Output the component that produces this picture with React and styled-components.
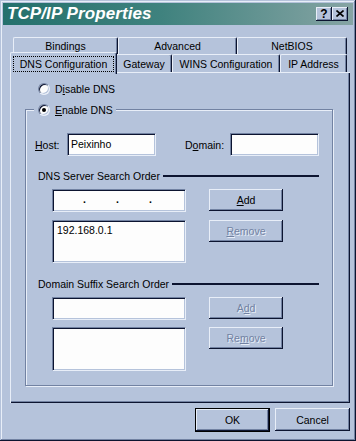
import styled, { createGlobalStyle, css } from "styled-components";

const c = {
    face: "#b5c3db",
    light: "#e8eef8",
    shadow: "#7282a2",
    dark: "#0c1430",
    field: "#fdfdfd",
};

const GlobalStyle = createGlobalStyle`
    * { box-sizing: border-box; }
    html, body {
        margin: 0;
        padding: 0;
        background: ${c.face};
    }
    body {
        font-family: "Liberation Sans", Arial, sans-serif;
        font-size: 10.5px;
        color: #000;
    }
`;

const raised = css`
    box-shadow: inset -1px -1px ${c.dark}, inset 1px 1px ${c.light},
    inset -2px -2px ${c.shadow}, inset 2px 2px ${c.face};
`;

const sunken = css`
    border: 1px solid;
    border-color: ${c.shadow} ${c.light} ${c.light} ${c.shadow};
    box-shadow: inset 1px 1px ${c.dark}, inset -1px -1px ${c.face};
`;

const Window = styled.div`
    width: 356px;
    height: 441px;
    padding: 3px;
    background: ${c.face};
    display: flex;
    flex-direction: column;
    box-shadow: inset -1px -1px ${c.dark}, inset 1px 1px ${c.face},
    inset -2px -2px ${c.shadow}, inset 2px 2px ${c.light};
`;

const TitleBar = styled.div`
    height: 22px;
    display: flex;
    align-items: center;
    justify-content: space-between;
    padding: 0 5px 0 4px;
    background: linear-gradient(90deg, #24706c 0%, #3f827e 45%, #86a4a4 100%);
`;

const TitleText = styled.span`
    color: #fff;
    font-size: 17px;
    font-weight: bold;
    font-style: italic;
    letter-spacing: 0.1px;
`;

const TitleButtons = styled.div`
    display: flex;
`;

const CaptionButton = styled.div`
    width: 16px;
    height: 14px;
    background: ${c.face};
    ${raised};
    display: flex;
    align-items: center;
    justify-content: center;
    font-weight: bold;
    font-size: 12px;
    line-height: 14px;
    padding-bottom: 1px;
`;

const Body = styled.div`
    flex: 1;
    display: flex;
    flex-direction: column;
    padding: 12px 3px 0 7px;
`;

const TabRow = styled.div`
    display: flex;
    height: ${({ $h }) => $h}px;
    padding-left: ${({ $indent }) => $indent}px;
`;

const Tab = styled.div`
    width: ${({ $w }) => $w}px;
    background: ${c.face};
    border-top: 1px solid ${c.light};
    border-left: 1px solid ${c.light};
    border-right: 1px solid ${c.dark};
    box-shadow: inset -1px 0 ${c.shadow};
    border-radius: 2px 2px 0 0;
    display: flex;
    align-items: center;
    justify-content: center;
    ${({ $active }) => $active && css`
        position: relative;
        z-index: 1;
        margin: -2px -1px -2px -2px;
        padding: 2px 2px 2px 2px;
        width: ${({ $w }) => $w + 3}px;
    `}
`;

const FocusRing = styled.span`
    flex: 1;
    align-self: stretch;
    display: flex;
    align-items: center;
    justify-content: center;
    border: 1px dotted #000;
    margin: 1px 0 0 0;
`;

const Panel = styled.div`
    height: 331px;
    padding: 10px 0 0 15px;
    background: ${c.face};
    box-shadow: inset 1px 1px ${c.light}, inset -1px -1px ${c.dark},
    inset -2px -2px ${c.shadow};
`;

const RadioRow = styled.label`
    display: flex;
    align-items: center;
    gap: 5px;
    height: 13px;
    margin-left: ${({ $ml }) => $ml || 0}px;
`;

const RadioDot = styled.span`
    width: 12px;
    height: 12px;
    border-radius: 50%;
    background: ${c.field};
    ${sunken};
    display: flex;
    align-items: center;
    justify-content: center;

    &::after {
        content: "";
        width: 4px;
        height: 4px;
        border-radius: 50%;
        background: ${({ $checked }) => ($checked ? "#000" : "transparent")};
    }
`;

const Group = styled.div`
    margin-top: 14px;
    width: 308px;
    height: 277px;
    border: 1px solid ${c.shadow};
    box-shadow: 1px 1px 0 ${c.light}, inset 1px 1px 0 ${c.light};
    display: flex;
    flex-direction: column;
`;

const Legend = styled.div`
    margin: -7px 0 0 8px;
    padding: 0 3px 0 4px;
    background: ${c.face};
    align-self: flex-start;
`;

const HostRow = styled.div`
    display: flex;
    align-items: center;
    margin: 17px 0 0 9px;
`;

const FieldLabel = styled.span`
    width: ${({ $w }) => $w}px;
    margin-left: ${({ $ml }) => $ml || 0}px;
`;

const TextBox = styled.div`
    width: ${({ $w }) => $w}px;
    height: ${({ $h }) => $h || 23}px;
    background: ${c.field};
    ${sunken};
    padding: ${({ $pad }) => $pad || "0 4px"};
    display: flex;
    align-items: ${({ $top }) => ($top ? "flex-start" : "center")};
    line-height: 13px;
`;

const Octet = styled.span`
    flex: 0 0 33px;
    text-align: right;
    padding-bottom: 2px;
    font-weight: bold;
`;

const SectionHead = styled.div`
    display: flex;
    align-items: center;
    height: 13px;
    width: 281px;
    margin: ${({ $mt }) => $mt}px 0 0 12px;

    &::after {
        content: "";
        flex: 1;
        height: 2px;
        margin-left: 3px;
        background: ${c.dark};
    }
`;

const Section = styled.div`
    display: grid;
    grid-template-columns: 134px 74px;
    column-gap: 23px;
    row-gap: ${({ $gap }) => $gap}px;
    align-items: start;
    margin: 7px 0 0 26px;
`;

const Button = styled.div`
    width: ${({ $w }) => $w || 74}px;
    height: ${({ $h }) => $h || 22}px;
    background: ${c.face};
    ${raised};
    display: flex;
    align-items: center;
    justify-content: center;
    ${({ $disabled }) => $disabled && css`
        color: ${c.shadow};
        text-shadow: 1px 1px 0 ${c.light};
    `}
    ${({ $default }) => $default && css`
        border: 1px solid #000;
    `}
`;

const Footer = styled.div`
    display: flex;
    justify-content: flex-end;
    gap: 5px;
    margin-top: 5px;
`;

function Tabs() {
    return (
        <div>
            <TabRow $h={17} $indent={3}>
                <Tab $w={105}>Bindings</Tab>
                <Tab $w={119}>Advanced</Tab>
                <Tab $w={110}>NetBIOS</Tab>
            </TabRow>
            <TabRow $h={18} $indent={2}>
                <Tab $w={104} $active>
                    <FocusRing>DNS Configuration</FocusRing>
                </Tab>
                <Tab $w={56}>Gateway</Tab>
                <Tab $w={108}>WINS Configuration</Tab>
                <Tab $w={67}>IP Address</Tab>
            </TabRow>
        </div>
    );
}

function IpField() {
    return (
        <TextBox $w={134} $pad="0">
            <Octet>.</Octet>
            <Octet>.</Octet>
            <Octet>.</Octet>
        </TextBox>
    );
}

export default function App() {
    return (
        <>
            <GlobalStyle />
            <Window>
                <TitleBar>
                    <TitleText>TCP/IP Properties</TitleText>
                    <TitleButtons>
                        <CaptionButton>?</CaptionButton>
                        <CaptionButton>
                            <svg width="8" height="7" viewBox="0 0 8 7">
                                <path d="M0.5 0.5 L7.5 6.5 M7.5 0.5 L0.5 6.5" stroke="#000" strokeWidth="1.6" />
                            </svg>
                        </CaptionButton>
                    </TitleButtons>
                </TitleBar>
                <Body>
                    <Tabs />
                    <Panel>
                        <RadioRow $ml={13}>
                            <RadioDot />
                            <span>D<u>i</u>sable DNS</span>
                        </RadioRow>
                        <Group>
                            <Legend>
                                <RadioRow>
                                    <RadioDot $checked />
                                    <span><u>E</u>nable DNS</span>
                                </RadioRow>
                            </Legend>
                            <HostRow>
                                <FieldLabel $w={32}><u>H</u>ost:</FieldLabel>
                                <TextBox $w={89} $pad="0 3px">Peixinho</TextBox>
                                <FieldLabel $w={45} $ml={29}>D<u>o</u>main:</FieldLabel>
                                <TextBox $w={89} />
                            </HostRow>
                            <SectionHead $mt={13}>DNS Server Search Order</SectionHead>
                            <Section $gap={8}>
                                <IpField />
                                <Button><span><u>A</u>dd</span></Button>
                                <TextBox $w={134} $h={43} $top $pad="3px 4px">192.168.0.1</TextBox>
                                <Button $disabled><span><u>R</u>emove</span></Button>
                            </Section>
                            <SectionHead $mt={14}>Domain Suffix Search Order</SectionHead>
                            <Section $gap={7}>
                                <TextBox $w={134} />
                                <Button $disabled><span>A<u>d</u>d</span></Button>
                                <TextBox $w={134} $h={44} />
                                <Button $disabled><span>Re<u>m</u>ove</span></Button>
                            </Section>
                        </Group>
                    </Panel>
                    <Footer>
                        <Button $w={75} $h={24} $default>OK</Button>
                        <Button $w={75} $h={23}>Cancel</Button>
                    </Footer>
                </Body>
            </Window>
        </>
    );
}
